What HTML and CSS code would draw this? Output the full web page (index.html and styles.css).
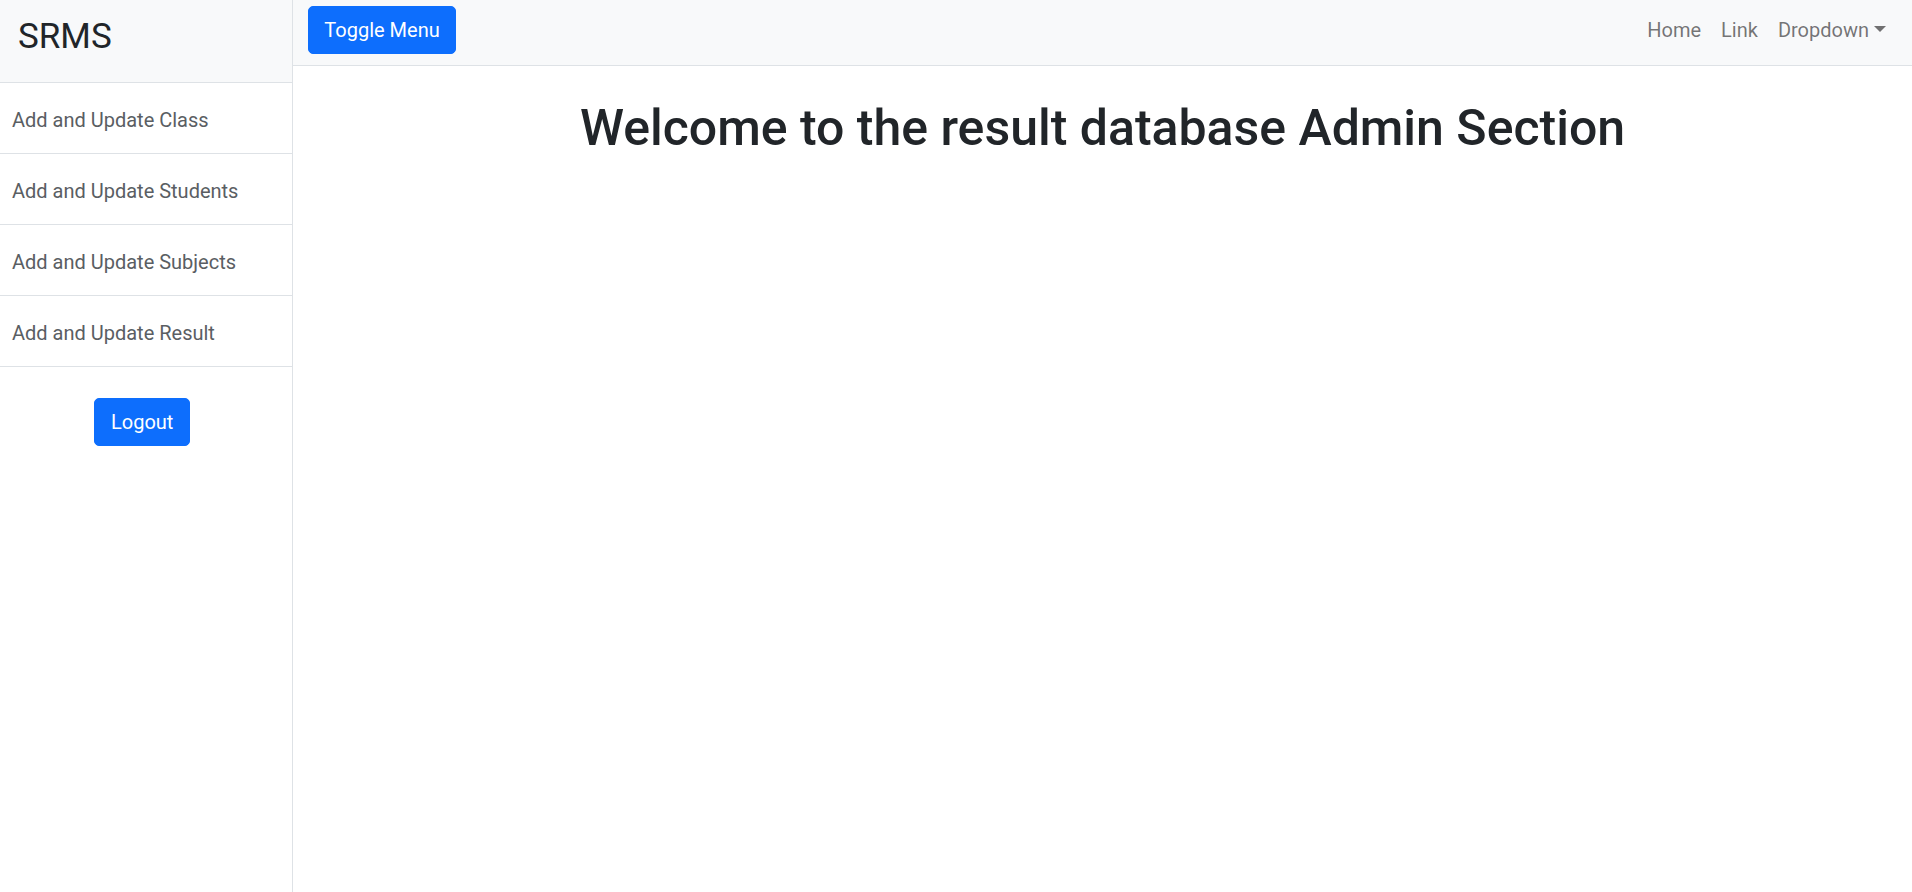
FILE: index.html
```html
<!DOCTYPE html>
<html lang="en">
<head>
<meta charset="utf-8">
<title>SRMS Admin</title>
<link rel="stylesheet" href="styles.css">
</head>
<body>
<div class="wrapper">
  <aside class="sidebar">
    <div class="sidebar-heading">SRMS</div>
    <nav class="list-group">
      <a class="list-item" href="#">Add and Update Class</a>
      <a class="list-item" href="#">Add and Update Students</a>
      <a class="list-item" href="#">Add and Update Subjects</a>
      <a class="list-item" href="#">Add and Update Result</a>
    </nav>
    <div class="logout-wrap">
      <button class="btn" type="button">Logout</button>
    </div>
  </aside>
  <div class="page">
    <header class="navbar">
      <button class="btn" type="button">Toggle Menu</button>
      <ul class="nav">
        <li><a class="nav-link" href="#">Home</a></li>
        <li><a class="nav-link" href="#">Link</a></li>
        <li><a class="nav-link dropdown" href="#">Dropdown</a></li>
      </ul>
    </header>
    <main class="content">
      <h1 class="title">Welcome to the result database Admin Section</h1>
    </main>
  </div>
</div>
</body>
</html>
```
FILE: styles.css
```css
* { box-sizing: border-box; }
html, body { height: 100%; }
body {
  margin: 0;
  font-family: Roboto, "Liberation Sans", sans-serif;
  font-size: 20px;
  line-height: 1.5;
  color: #212529;
  background: #fff;
}
.wrapper {
  display: flex;
  height: 100vh;
}
.sidebar {
  width: 293px;
  flex: 0 0 293px;
  border-right: 1px solid #dee2e6;
  display: flex;
  flex-direction: column;
}
.sidebar-heading {
  height: 83px;
  padding: 16px 0 0 18px;
  font-size: 35px;
  line-height: 42px;
  background: #f8f9fa;
  border-bottom: 1px solid #dee2e6;
  color: #212529;
}
.list-group {
  display: flex;
  flex-direction: column;
}
.list-item {
  display: block;
  height: 71px;
  padding: 22px 12px 0;
  line-height: 30px;
  color: #5a5e63;
  text-decoration: none;
  border-bottom: 1px solid #dee2e6;
}
.logout-wrap {
  display: flex;
  justify-content: center;
  padding: 31px 8px 0 0;
}
.btn {
  font-family: inherit;
  font-size: 20px;
  line-height: 30px;
  color: #fff;
  background: #0d6efd;
  border: 1px solid #0d6efd;
  border-radius: 5px;
  padding: 8px 16px;
  cursor: pointer;
}
.logout-wrap .btn { padding: 8px 16px; width: 96px; }
.page {
  flex: 1;
  display: flex;
  flex-direction: column;
}
.navbar {
  height: 66px;
  background: #f8f9fa;
  border-bottom: 1px solid #dee2e6;
  display: flex;
  align-items: flex-start;
  justify-content: space-between;
  padding: 6px 16px 0 15px;
}
.navbar .btn { width: 148px; padding: 8px 0; }
.nav {
  list-style: none;
  margin: 0;
  padding: 0;
  display: flex;
  align-items: center;
  height: 48px;
}
.nav-link {
  display: block;
  padding: 0 10px;
  color: rgba(0, 0, 0, 0.55);
  text-decoration: none;
  line-height: 30px;
}
.dropdown::after {
  content: "";
  display: inline-block;
  margin-left: 5px;
  vertical-align: 5px;
  border-top: 6px solid;
  border-left: 6px solid transparent;
  border-right: 6px solid transparent;
}
.content {
  flex: 1;
  text-align: center;
}
.title {
  margin: 32px 0 0;
  font-size: 50px;
  font-weight: 500;
  line-height: 60px;
}
```
